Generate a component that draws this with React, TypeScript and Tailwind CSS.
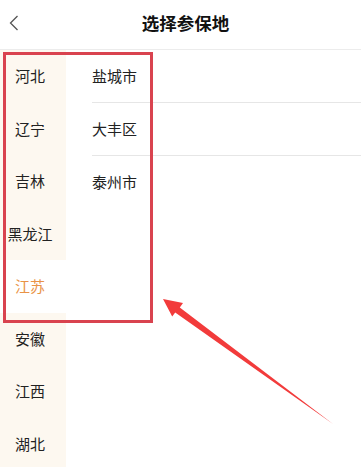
import React from "react";

const provinces = ["河北", "辽宁", "吉林", "黑龙江", "江苏", "安徽", "江西", "湖北"];
const cities = ["盐城市", "大丰区", "泰州市"];

const App = () => {
  const selected = "江苏";

  return (
    <div
      className="relative w-[361px] h-[467px] overflow-hidden bg-white text-[#333]"
      style={{ fontFamily: '"Noto Sans CJK SC", "Noto Sans", sans-serif' }}
    >
      {/* header */}
      <div className="relative h-[50px] flex items-center justify-center border-b border-[#ececec]">
        <svg className="absolute left-[9px] top-[15px]" width="10" height="16" viewBox="0 0 10 16">
          <path d="M8.5 1 L1.5 8 L8.5 15" fill="none" stroke="#555" strokeWidth="1.3" />
        </svg>
        <h1 className="text-[17.5px] font-bold text-[#111] ml-[10px] -mt-[2px]">选择参保地</h1>
      </div>

      <div className="flex">
        {/* provinces */}
        <div className="w-[66px] bg-[#fdf8f0] flex flex-col">
          {provinces.map((p) => (
            <div
              key={p}
              className={
                p === selected
                  ? "h-[52.5px] flex items-center justify-center pr-[6px] text-[15px] bg-white text-[#e99346]"
                  : "h-[52.5px] flex items-center justify-center pr-[6px] text-[15px] text-[#222]"
              }
            >
              {p}
            </div>
          ))}
        </div>

        {/* cities */}
        <div className="flex-1 flex flex-col pl-[26px]">
          {cities.map((c, i) => (
            <div
              key={c}
              className={
                i < cities.length - 1
                  ? "h-[53px] flex items-center text-[15px] text-[#222] border-b border-[#e6e6e6]"
                  : "h-[53px] flex items-center text-[15px] text-[#222]"
              }
            >
              {c}
            </div>
          ))}
        </div>
      </div>

      {/* annotation box */}
      <div className="absolute left-[3px] top-[52px] w-[150px] h-[271px] border-[3px] border-[#d9434f] pointer-events-none" />

      {/* annotation arrow */}
      <svg className="absolute left-0 top-0 pointer-events-none" width="361" height="467" viewBox="0 0 361 467">
        <polygon
          points="163,299 183,303 179.8,307.6 333,424 175.2,312.4 172.2,316.5"
          fill="#f23b3b"
        />
      </svg>
    </div>
  );
};

export default App;
